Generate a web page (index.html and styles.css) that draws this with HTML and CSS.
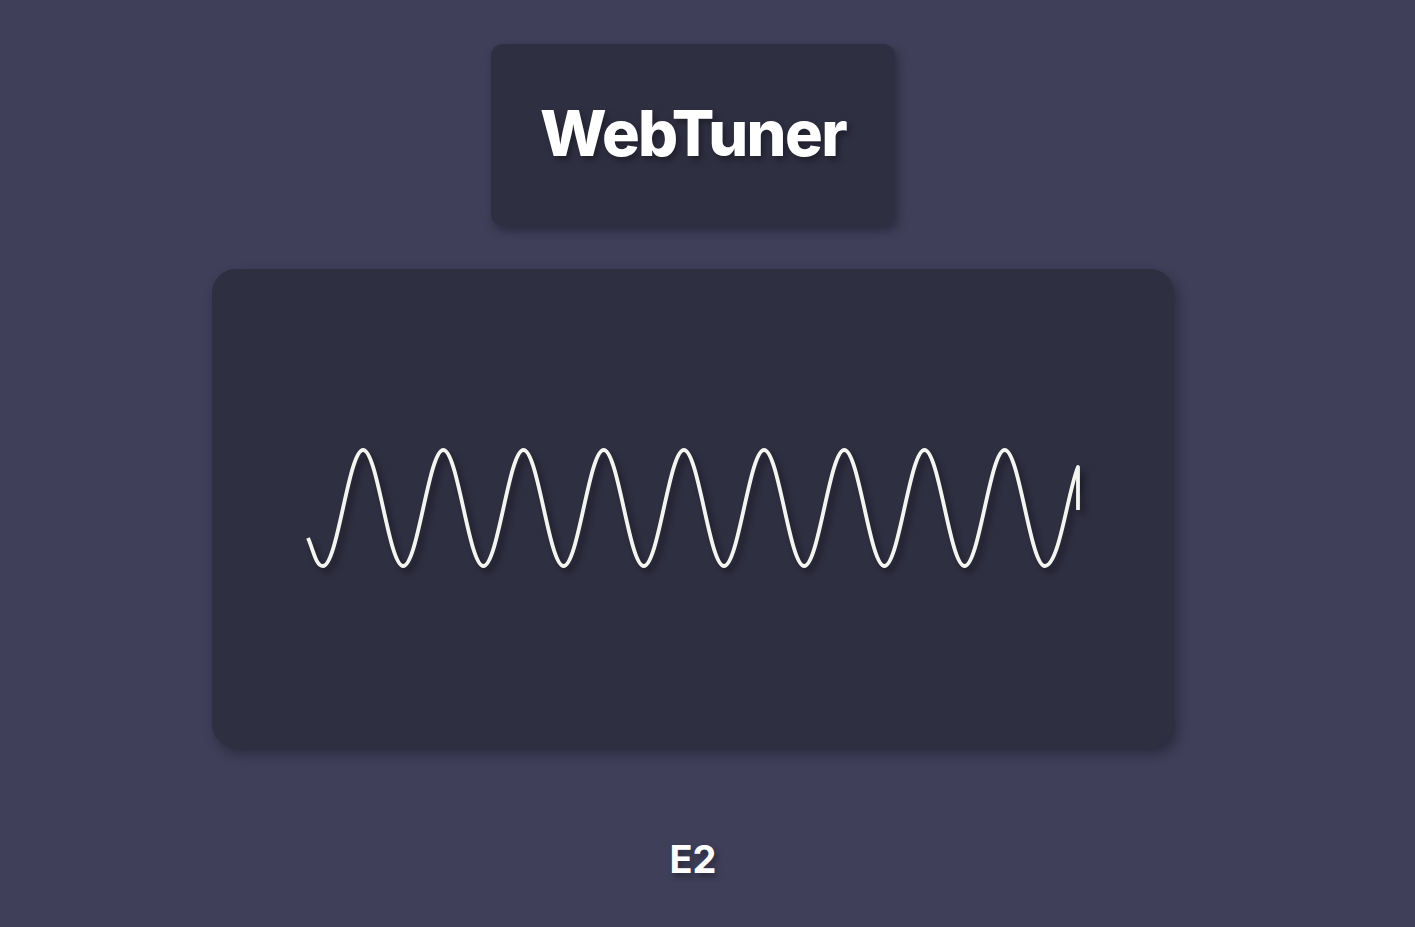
FILE: index.html
```html
<!DOCTYPE html>
<html lang="en">
<head>
<meta charset="utf-8">
<title>WebTuner</title>
<link rel="stylesheet" href="styles.css">
</head>
<body>
<main class="app">
  <header class="title-card">
    <h1 class="title">WebTuner</h1>
  </header>
  <section class="scope-card">
    <svg class="wave" viewBox="212 269 962 479" preserveAspectRatio="none" xmlns="http://www.w3.org/2000/svg">
      <path d="M308,538 C314,552 316,566 323,566 C337.57,566 348.53,450 363.1,450 S388.63,566 403.2,566 S428.73,450 443.3,450 S468.83,566 483.4,566 S508.93,450 523.5,450 S549.03,566 563.6,566 S589.13,450 603.7,450 S629.23,566 643.8,566 S669.33,450 683.9,450 S709.43,566 724,566 S749.53,450 764.1,450 S789.63,566 804.2,566 S829.73,450 844.3,450 S869.83,566 884.4,566 S909.93,450 924.5,450 S950.03,566 964.6,566 S990.13,450 1004.7,450 S1030.23,566 1044.8,566 C1059.37,566 1068,490 1078,467 L1078,510" />
    </svg>
  </section>
  <p class="note">E2</p>
</main>
</body>
</html>
```

FILE: styles.css
```css
html, body {
  margin: 0;
  padding: 0;
  background: #3f3f5a;
}

body {
  font-family: Inter, "Liberation Sans", sans-serif;
  color: #ffffff;
}

.app {
  width: 1386px;
  display: flex;
  flex-direction: column;
  align-items: center;
  padding-top: 44px;
}

.title-card {
  width: 404px;
  height: 182px;
  box-sizing: border-box;
  background: #2f2f42;
  border-radius: 12px;
  box-shadow: 3px 5px 10px rgba(20, 20, 30, 0.45);
  display: flex;
  align-items: center;
  justify-content: center;
}

.title {
  margin: 0;
  font-size: 63px;
  font-weight: 800;
  letter-spacing: -1.6px;
  text-shadow: 3px 4px 6px rgba(0, 0, 0, 0.35);
  line-height: 1;
  padding-bottom: 4px;
}

.scope-card {
  margin-top: 43px;
  width: 962px;
  height: 479px;
  background: #2f2f42;
  border-radius: 24px;
  box-shadow: 4px 6px 12px rgba(20, 20, 30, 0.45);
  overflow: hidden;
}

.wave {
  display: block;
  width: 100%;
  height: 100%;
}

.wave path {
  fill: none;
  stroke: #f4f4f0;
  stroke-width: 3.8;
  stroke-linejoin: round;
  filter: drop-shadow(4px 5px 3px rgba(0, 0, 0, 0.45));
}

.note {
  margin: 89px 0 0;
  font-size: 38px;
  font-weight: 700;
  line-height: 1.2;
  text-shadow: 3px 4px 6px rgba(0, 0, 0, 0.35);
}
```
